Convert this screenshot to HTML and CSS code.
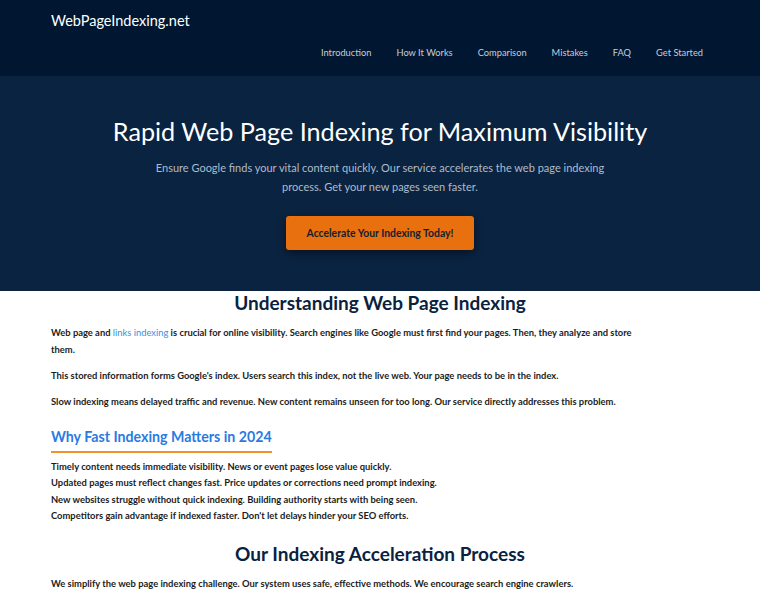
FILE: index.html
```html
<!DOCTYPE html>
<html lang="en">
<head>
<meta charset="utf-8">
<title>WebPageIndexing.net</title>
<link rel="stylesheet" href="styles.css">
</head>
<body>
<header class="site-header">
  <div class="logo">WebPageIndexing.net</div>
  <nav class="nav">
    <a href="#">Introduction</a>
    <a href="#">How It Works</a>
    <a href="#">Comparison</a>
    <a href="#">Mistakes</a>
    <a href="#">FAQ</a>
    <a href="#">Get Started</a>
  </nav>
</header>
<section class="hero">
  <h1>Rapid Web Page Indexing for Maximum Visibility</h1>
  <p>Ensure Google finds your vital content quickly. Our service accelerates the web page indexing process. Get your new pages seen faster.</p>
  <a class="cta" href="#">Accelerate Your Indexing Today!</a>
</section>
<main class="content">
  <h2>Understanding Web Page Indexing</h2>
  <p>Web page and <a href="#">links indexing</a> is crucial for online visibility. Search engines like Google must first find your pages. Then, they analyze and store them.</p>
  <p>This stored information forms Google's index. Users search this index, not the live web. Your page needs to be in the index.</p>
  <p>Slow indexing means delayed traffic and revenue. New content remains unseen for too long. Our service directly addresses this problem.</p>
  <h3>Why Fast Indexing Matters in 2024</h3>
  <ul class="plain">
    <li>Timely content needs immediate visibility. News or event pages lose value quickly.</li>
    <li>Updated pages must reflect changes fast. Price updates or corrections need prompt indexing.</li>
    <li>New websites struggle without quick indexing. Building authority starts with being seen.</li>
    <li>Competitors gain advantage if indexed faster. Don't let delays hinder your SEO efforts.</li>
  </ul>
  <h2>Our Indexing Acceleration Process</h2>
  <p>We simplify the web page indexing challenge. Our system uses safe, effective methods. We encourage search engine crawlers.</p>
</main>
</body>
</html>
```
FILE: styles.css
```css
* { box-sizing: border-box; }
html, body { margin: 0; padding: 0; }
body {
  font-family: Lato, "Open Sans", sans-serif;
  color: #1c1c1c;
  background: #ffffff;
}
.site-header {
  background: #011731;
  padding: 11px 57px 14px 51px;
  height: 76px;
}
.logo {
  color: #ffffff;
  font-size: 14.5px;
  line-height: 20px;
}
.nav {
  display: flex;
  justify-content: flex-end;
  gap: 25px;
  margin-top: 15px;
}
.nav a {
  color: #c3cedb;
  font-size: 9.3px;
  text-decoration: none;
  line-height: 14px;
}
.hero {
  background: #0a2340;
  height: 215px;
  text-align: center;
  padding-top: 38px;
}
.hero h1 {
  margin: 0;
  color: #ffffff;
  font-weight: 400;
  font-size: 25.2px;
  line-height: 34px;
}
.hero p {
  margin: 10px auto 0;
  max-width: 480px;
  color: #aebccc;
  font-size: 11px;
  line-height: 19px;
}
.cta {
  display: inline-block;
  margin-top: 20px;
  background: #e8700f;
  color: #14202e;
  font-weight: 700;
  font-size: 10.4px;
  line-height: 34px;
  width: 188px;
  border-radius: 3px;
  text-decoration: none;
  box-shadow: 0 3px 8px rgba(0,0,0,0.45);
}
.content {
  max-width: 658px;
  margin: 0 auto;
  padding: 0;
}
.content h2 {
  text-align: center;
  color: #0a2240;
  font-size: 19px;
  font-weight: 700;
  line-height: 24px;
  margin: 0 0 9px;
}
.content p {
  font-size: 9.4px;
  font-weight: 700;
  line-height: 17px;
  margin: 0 0 9px;
  max-width: 600px;
}
.content a { color: #3a8fe0; text-decoration: none; font-weight: 400; }
.content h3 {
  display: inline-block;
  color: #2a7ae2;
  font-size: 14.2px;
  font-weight: 700;
  line-height: 20px;
  margin: 8px 0 0;
  padding-bottom: 4px;
  border-bottom: 2px solid #f0922a;
}
.plain {
  list-style: none;
  padding: 0;
  margin: 6px 0 18px;
}
.plain li {
  font-size: 9.4px;
  font-weight: 700;
  line-height: 16.3px;
}
```
